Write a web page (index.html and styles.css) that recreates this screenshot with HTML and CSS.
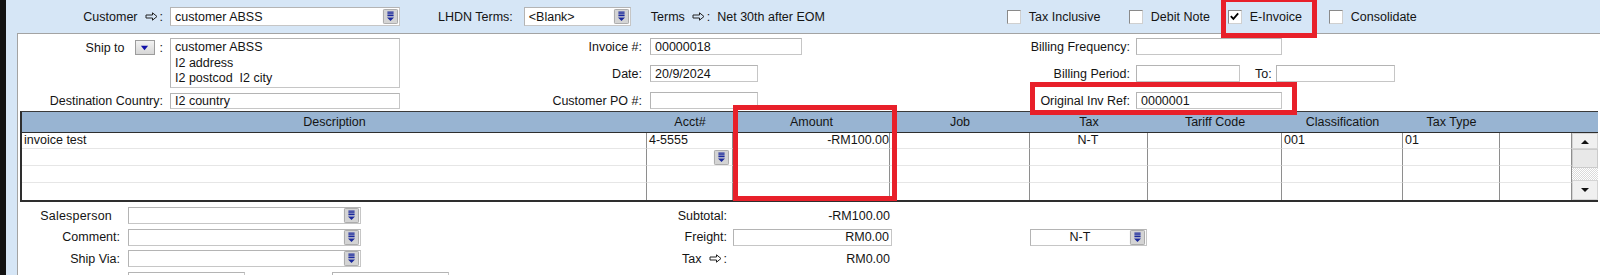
FILE: index.html
```html
<!DOCTYPE html>
<html lang="en">
<head>
    <meta charset="UTF-8" />
    <title>Sales - Invoice</title>
    <link rel="stylesheet" href="styles.css">
</head>
<body>
    <div class="window">
        <div class="topbar">
            <div class="top-label">Customer <svg class="arrow" viewBox="0 0 13 9"><path d="M1 3h6.5V0.8L12 4.5 7.5 8.2V6H1z"/></svg>:</div>
            <div class="field combo cust">customer ABSS<svg class="dd" viewBox="0 0 17 17"><rect x="0.5" y="0.5" width="16" height="16" rx="1"/><path class="bars" d="M5 3.5h7M5 5.5h7M5 7.5h7"/><path class="tri" d="M4.5 9.5h8L8.5 13.5z"/></svg></div>
            <div class="lhdn-label">LHDN Terms:</div>
            <div class="field combo lhdn">&lt;Blank&gt;<svg class="dd" viewBox="0 0 17 17"><rect x="0.5" y="0.5" width="16" height="16" rx="1"/><path class="bars" d="M5 3.5h7M5 5.5h7M5 7.5h7"/><path class="tri" d="M4.5 9.5h8L8.5 13.5z"/></svg></div>
            <div class="terms">Terms <svg class="arrow" viewBox="0 0 13 9"><path d="M1 3h6.5V0.8L12 4.5 7.5 8.2V6H1z"/></svg>:&nbsp; Net 30th after EOM</div>
            <div class="check w-tax"><span class="box"></span>Tax Inclusive</div>
            <div class="check w-debit"><span class="box"></span>Debit Note</div>
            <div class="check w-einv"><span class="box"><svg viewBox="0 0 12 12"><path d="M2 5.5l2.8 3L10 2.5"/></svg></span>E-Invoice</div>
            <div class="check"><span class="box"></span>Consolidate</div>
        </div>

        <div class="panel">
            <div class="upper">
                <div class="ship-block">
                    <div class="label ship-label">Ship to <span class="ship-btn"><svg viewBox="0 0 10 6"><path d="M1 0.5h8L5 5.5z"/></svg></span>:</div>
                    <div class="field address">
                        <div>customer ABSS</div>
                        <div>I2 address</div>
                        <div>I2 postcod&nbsp; I2 city</div>
                    </div>
                    <div class="label">Destination Country:</div>
                    <div class="field">I2 country</div>
                </div>

                <div class="mid-block">
                    <div class="label">Invoice #:</div>
                    <div class="field w152">00000018</div>
                    <div class="label">Date:</div>
                    <div class="field w108">20/9/2024</div>
                    <div class="label">Customer PO #:</div>
                    <div class="field w108"></div>
                </div>

                <div class="right-block">
                    <div class="label">Billing Frequency:</div>
                    <div class="field w146"></div>
                    <div class="label">Billing Period:</div>
                    <div class="period">
                        <div class="field w104"></div>
                        <span class="to">To:</span>
                        <div class="field w119"></div>
                    </div>
                    <div class="label">Original Inv Ref:</div>
                    <div class="field w146">0000001</div>
                </div>
            </div>

            <div class="lines">
                <div class="lines-head">
                    <div>Description</div>
                    <div>Acct#</div>
                    <div>Amount</div>
                    <div>Job</div>
                    <div>Tax</div>
                    <div>Tariff Code</div>
                    <div>Classification</div>
                    <div>Tax Type</div>
                    <div></div>
                    <div></div>
                </div>
                <div class="lines-body">
                    <div class="rows">
                        <div class="row">
                            <div>invoice test</div>
                            <div>4-5555</div>
                            <div class="num">-RM100.00</div>
                            <div></div>
                            <div class="mid">N-T</div>
                            <div></div>
                            <div>001</div>
                            <div>01</div>
                            <div></div>
                        </div>
                        <div class="row">
                            <div></div>
                            <div class="acct-dd"><svg class="dd" viewBox="0 0 17 17"><rect x="0.5" y="0.5" width="16" height="16" rx="1"/><path class="bars" d="M5 3.5h7M5 5.5h7M5 7.5h7"/><path class="tri" d="M4.5 9.5h8L8.5 13.5z"/></svg></div>
                            <div></div><div></div><div></div><div></div><div></div><div></div><div></div>
                        </div>
                        <div class="row">
                            <div></div><div></div><div></div><div></div><div></div><div></div><div></div><div></div><div></div>
                        </div>
                        <div class="row">
                            <div></div><div></div><div></div><div></div><div></div><div></div><div></div><div></div><div></div>
                        </div>
                    </div>
                    <div class="scroll">
                        <div class="sc-btn up"><svg viewBox="0 0 8 5"><path d="M0 5L4 1 8 5z"/></svg></div>
                        <div class="sc-thumb"></div>
                        <div class="sc-track"></div>
                        <div class="sc-btn down"><svg viewBox="0 0 8 5"><path d="M0 0h8L4 4z"/></svg></div>
                    </div>
                </div>
            </div>

            <div class="lower">
                <div class="label sales">Salesperson</div>
                <div class="field combo">&nbsp;<svg class="dd" viewBox="0 0 17 17"><rect x="0.5" y="0.5" width="16" height="16" rx="1"/><path class="bars" d="M5 3.5h7M5 5.5h7M5 7.5h7"/><path class="tri" d="M4.5 9.5h8L8.5 13.5z"/></svg></div>
                <div class="label tot">Subtotal:</div>
                <div class="value">-RM100.00</div>
                <div></div>
                <div></div>

                <div class="label">Comment:</div>
                <div class="field combo">&nbsp;<svg class="dd" viewBox="0 0 17 17"><rect x="0.5" y="0.5" width="16" height="16" rx="1"/><path class="bars" d="M5 3.5h7M5 5.5h7M5 7.5h7"/><path class="tri" d="M4.5 9.5h8L8.5 13.5z"/></svg></div>
                <div class="label tot">Freight:</div>
                <div class="field value">RM0.00</div>
                <div></div>
                <div class="field combo nt"><span class="nt-text">N-T</span><svg class="dd" viewBox="0 0 17 17"><rect x="0.5" y="0.5" width="16" height="16" rx="1"/><path class="bars" d="M5 3.5h7M5 5.5h7M5 7.5h7"/><path class="tri" d="M4.5 9.5h8L8.5 13.5z"/></svg></div>

                <div class="label">Ship Via:</div>
                <div class="field combo">&nbsp;<svg class="dd" viewBox="0 0 17 17"><rect x="0.5" y="0.5" width="16" height="16" rx="1"/><path class="bars" d="M5 3.5h7M5 5.5h7M5 7.5h7"/><path class="tri" d="M4.5 9.5h8L8.5 13.5z"/></svg></div>
                <div class="label tot">Tax <svg class="arrow" viewBox="0 0 13 9"><path d="M1 3h6.5V0.8L12 4.5 7.5 8.2V6H1z"/></svg>:</div>
                <div class="value">RM0.00</div>
                <div></div>
                <div></div>

                <div></div>
                <div class="cut-row">
                    <div class="field w117"></div>
                    <div class="field w117"></div>
                </div>
            </div>
        </div>
    </div>

    <div class="mark mark-einv"></div>
    <div class="mark mark-ref"></div>
    <div class="mark mark-amount"></div>
</body>
</html>
```

FILE: styles.css
```css
html, body {
    margin: 0;
    padding: 0;
}

body {
    position: relative;
    width: 1600px;
    height: 275px;
    overflow: hidden;
    background: #d6e6f6;
    color: #141414;
    font-family: "Liberation Sans", Arial, sans-serif;
    font-size: 12.5px;
}

.window {
    height: 275px;
    border-left: 6px solid #121212;
    background: #d6e6f6;
}

/* top strip */
.topbar {
    display: flex;
    align-items: center;
    height: 33px;
}

.top-label {
    width: 157px;
    display: flex;
    justify-content: flex-end;
    align-items: center;
}

.arrow {
    width: 13px;
    height: 9px;
    margin: 0 2px 0 7px;
}

.arrow path {
    fill: none;
    stroke: #222;
    stroke-width: 1;
}

.field {
    box-sizing: border-box;
    height: 17px;
    display: flex;
    align-items: center;
    padding: 0 4px;
    background: #fff;
    border: 1px solid #c6c6c6;
    border-top-color: #b4b4b4;
    border-left-color: #b4b4b4;
    white-space: nowrap;
}

.combo {
    justify-content: space-between;
    padding-right: 0;
}

.dd {
    width: 17px;
    height: 15px;
    flex: none;
}

.dd rect {
    fill: #d4d4d4;
    stroke: #a0a0a0;
}

.dd .bars {
    stroke: #1a289c;
    stroke-width: 1.3;
}

.dd .tri {
    fill: #1a289c;
}

.cust {
    width: 230px;
    height: 19px;
    margin-left: 7px;
}

.lhdn-label {
    margin-left: 38px;
}

.lhdn {
    width: 107px;
    height: 19px;
    margin-left: 11px;
}

.terms {
    width: 356px;
    margin-left: 20px;
    display: flex;
    align-items: center;
}

.check {
    display: flex;
    align-items: center;
    gap: 8px;
}

.w-tax { width: 122px; }
.w-debit { width: 99px; }
.w-einv { width: 101px; }

.box {
    box-sizing: border-box;
    width: 14px;
    height: 14px;
    background: #fff;
    border: 1px solid #8a8a8a;
    border-right-color: #d0d0d0;
    border-bottom-color: #d0d0d0;
    display: flex;
    align-items: center;
    justify-content: center;
}

.box svg {
    width: 11px;
    height: 11px;
}

.box svg path {
    fill: none;
    stroke: #000;
    stroke-width: 2;
}

/* white form panel */
.panel {
    height: 242px;
    margin-left: 11px;
    background: #fff;
    border-top: 1px solid #a3a3a3;
    border-left: 1px solid #a3a3a3;
    overflow: hidden;
}

.label {
    text-align: right;
    white-space: nowrap;
}

.upper {
    display: flex;
    box-sizing: border-box;
    height: 77px;
    padding-top: 4px;
}

.ship-block {
    width: 382px;
    display: grid;
    grid-template-columns: 145px 230px;
    grid-template-rows: 50px 16px;
    column-gap: 7px;
    row-gap: 5px;
    align-items: center;
}

.ship-label {
    align-self: start;
    display: flex;
    justify-content: flex-end;
    align-items: center;
    padding-top: 2px;
}

.ship-btn {
    box-sizing: border-box;
    width: 20px;
    height: 15px;
    margin: 0 5px 0 10px;
    display: flex;
    align-items: center;
    justify-content: center;
    background: linear-gradient(#f2f2f2, #d6d6d6);
    border: 1px solid #9c9c9c;
}

.ship-btn svg {
    width: 9px;
    height: 6px;
}

.ship-btn path {
    fill: #1010a8;
}

.address {
    height: 50px;
    display: block;
    padding: 1px 4px 0;
    line-height: 15.5px;
}

.ship-block .field:last-child {
    height: 16px;
}

.mid-block {
    width: 402px;
    display: grid;
    grid-template-columns: 242px auto;
    grid-auto-rows: 17px;
    column-gap: 8px;
    row-gap: 10px;
    align-items: center;
    justify-items: start;
}

.mid-block .label,
.right-block .label {
    justify-self: end;
}

.right-block {
    display: grid;
    grid-template-columns: 328px auto;
    grid-auto-rows: 17px;
    column-gap: 6px;
    row-gap: 10px;
    align-items: center;
    justify-items: start;
}

.w104 { width: 104px; }
.w108 { width: 108px; }
.w117 { width: 117px; }
.w119 { width: 119px; }
.w146 { width: 146px; }
.w152 { width: 152px; }

.period {
    display: flex;
    align-items: center;
}

.to {
    margin: 0 4px 0 15px;
}

/* line items grid */
.lines {
    width: 1578px;
    margin-left: 2px;
    border-top: 1px solid #3a3a3a;
    border-left: 2px solid #2e2e2e;
    border-bottom: 2px solid #2e2e2e;
    box-sizing: border-box;
}

.lines-head {
    display: grid;
    grid-template-columns: 625px 86px 157px 140px 118px 134px 121px 97px 72px 1fr;
    height: 20px;
    align-items: center;
    text-align: center;
    background: #98b4d2;
    border-bottom: 1px solid #2e2e2e;
}

.lines-body {
    display: flex;
}

.rows {
    width: 1550px;
    display: grid;
    grid-template-rows: 16px 17px 17px 17px;
}

.row {
    display: grid;
    grid-template-columns: 625px 86px 157px 140px 118px 134px 121px 97px 72px;
}

.row > div {
    box-sizing: border-box;
    border-right: 1px solid #8e8e8e;
    border-bottom: 1px solid #e6e6e6;
    padding: 0 3px 0 2px;
    line-height: 15px;
    white-space: nowrap;
}

.row:last-child > div {
    border-bottom: none;
}

.row > .num {
    text-align: right;
    padding-right: 0;
}

.row > .mid {
    text-align: center;
}

.row > .acct-dd {
    display: flex;
    justify-content: flex-end;
    align-items: center;
    padding-right: 2px;
}

.scroll {
    flex: 1;
    display: flex;
    flex-direction: column;
    background: #f0f0f0;
}

.sc-btn {
    box-sizing: border-box;
    display: flex;
    align-items: center;
    justify-content: center;
    background: #f0f0f0;
    border: 1px solid #d4d4d4;
}

.sc-btn svg {
    width: 8px;
    height: 5px;
}

.sc-btn path {
    fill: #111;
}

.up { height: 16px; }
.down { height: 20px; }

.sc-thumb {
    box-sizing: border-box;
    height: 19px;
    background: #e8e8e8;
    border: 1px solid #cbcbcb;
}

.sc-track {
    flex: 1;
    background-color: #fff;
    background-image: repeating-conic-gradient(#dadada 0 25%, #fff 0 50%);
    background-size: 2px 2px;
}

/* totals and bottom fields */
.lower {
    display: grid;
    grid-template-columns: 110px 233px 372px 159px 138px 117px;
    grid-auto-rows: 17px;
    row-gap: 4.7px;
    padding-top: 5px;
    align-items: center;
}

.lower .label {
    padding-right: 8px;
}

.lower .sales {
    padding-right: 16px;
    letter-spacing: 0.2px;
}

.lower .tot {
    padding-right: 6px;
    display: flex;
    justify-content: flex-end;
    align-items: center;
}

.value {
    text-align: right;
    padding-right: 2px;
}

.field.value {
    justify-content: flex-end;
}

.nt {
    padding-left: 0;
}

.nt-text {
    flex: 1;
    text-align: center;
}

.cut-row {
    grid-column: 2 / 4;
    display: flex;
    gap: 87px;
}

/* red annotation frames */
.mark {
    position: absolute;
    box-sizing: border-box;
    border: 5px solid #e8202a;
}

.mark-einv {
    left: 1221px;
    top: -3px;
    width: 96px;
    height: 41px;
}

.mark-ref {
    left: 1030px;
    top: 82px;
    width: 267px;
    height: 33px;
}

.mark-amount {
    left: 733px;
    top: 105px;
    width: 164px;
    height: 96px;
}
```
